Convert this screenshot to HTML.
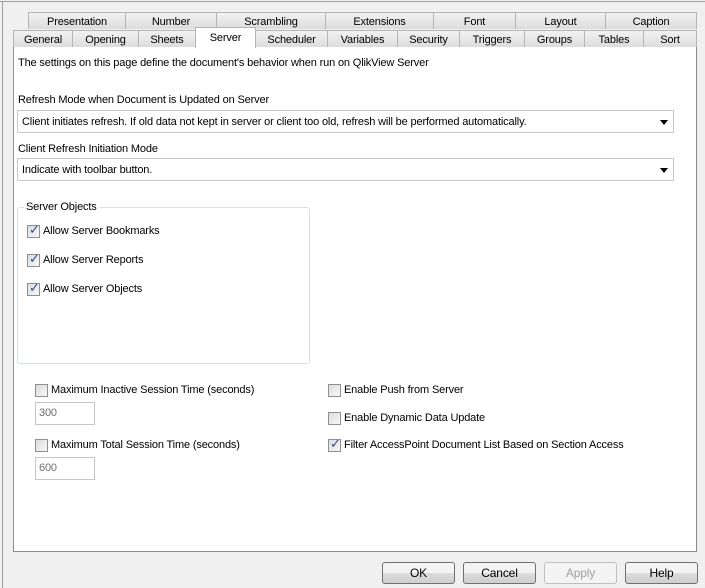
<!DOCTYPE html><html><head><style>
body{margin:0;width:705px;height:588px;background:#f0f0f0;font-family:"Liberation Sans",sans-serif;font-size:11px;letter-spacing:-0.15px;color:#000;position:relative;overflow:hidden}
.a{position:absolute;white-space:nowrap}
.l{margin-top:1px}
.t{position:absolute;height:17px;border:1px solid #b5b5b5;border-bottom:none;background:linear-gradient(#f2f2f2,#dcdcdc);text-align:center;line-height:18px;box-sizing:border-box}
.cb{position:absolute;width:13px;height:13px;box-sizing:border-box;border:1px solid #8e8f8f;background:linear-gradient(135deg,#dcdcdc,#f8f8f8)}
.cb.on::after{content:"✓";position:absolute;left:1px;top:-3px;font-size:13px;font-weight:bold;color:#2a4d94;font-family:"DejaVu Sans",sans-serif}
.cmb{position:absolute;left:17px;width:657px;height:23px;box-sizing:border-box;border:1px solid #c9c9c9;background:#fff;padding-left:4px;line-height:22px}
.cmb::after{content:"";position:absolute;right:5px;top:9px;border:4px solid transparent;border-top:5px solid #000;border-bottom:none}
.in{position:absolute;left:35px;width:60px;height:23px;box-sizing:border-box;border:1px solid #c5c5c5;background:#fff;color:#6d6d6d;padding-left:3px;line-height:20px}
.btn{position:absolute;top:562px;width:73px;height:22px;box-sizing:border-box;border:1px solid #707070;border-radius:3px;background:linear-gradient(#f4f4f4 50%,#dddddd 50%,#cfcfcf);text-align:center;line-height:20px;font-size:12px}
</style></head><body>
<div class="a" style="left:0;top:1px;width:705px;height:1px;background:#a0a0a0"></div>
<div class="a" style="left:2px;top:1px;width:1px;height:587px;background:#a0a0a0"></div>
<div class="a" style="left:13px;top:46px;width:684px;height:506px;box-sizing:border-box;border:1px solid #898c95;background:#fff"></div>
<div class="t" style="left:28px;top:12px;width:98px">Presentation</div>
<div class="t" style="left:125px;top:12px;width:92px">Number</div>
<div class="t" style="left:216px;top:12px;width:110px">Scrambling</div>
<div class="t" style="left:325px;top:12px;width:109px">Extensions</div>
<div class="t" style="left:433px;top:12px;width:83px">Font</div>
<div class="t" style="left:515px;top:12px;width:91px">Layout</div>
<div class="t" style="left:605px;top:12px;width:92px">Caption</div>
<div class="t" style="left:13px;top:30px;width:60px">General</div>
<div class="t" style="left:72px;top:30px;width:67px">Opening</div>
<div class="t" style="left:138px;top:30px;width:58px">Sheets</div>
<div class="t" style="left:195px;top:27px;width:61px;height:21px;background:#fff;line-height:20px;z-index:2">Server</div>
<div class="t" style="left:255px;top:30px;width:73px">Scheduler</div>
<div class="t" style="left:327px;top:30px;width:71px">Variables</div>
<div class="t" style="left:397px;top:30px;width:63px">Security</div>
<div class="t" style="left:459px;top:30px;width:66px">Triggers</div>
<div class="t" style="left:524px;top:30px;width:61px">Groups</div>
<div class="t" style="left:584px;top:30px;width:60px">Tables</div>
<div class="t" style="left:643px;top:30px;width:54px">Sort</div>
<div class="a" style="left:18px;top:57px">The settings on this page define the document's behavior when run on QlikView Server</div>
<div class="a" style="left:18px;top:94px">Refresh Mode when Document is Updated on Server</div>
<div class="cmb" style="top:110px">Client initiates refresh. If old data not kept in server or client too old, refresh will be performed automatically.</div>
<div class="a" style="left:18px;top:143px">Client Refresh Initiation Mode</div>
<div class="cmb" style="top:158px">Indicate with toolbar button.</div>
<div class="a" style="left:17px;top:207px;width:293px;height:157px;box-sizing:border-box;border:1px solid #d5dfe5;border-radius:3px"></div>
<div class="a" style="left:24px;top:201px;background:#fff;padding:0 2px">Server Objects</div>
<div class="cb on" style="left:27px;top:225px"></div><div class="a" style="left:43px;top:225px">Allow Server Bookmarks</div>
<div class="cb on" style="left:27px;top:254px"></div><div class="a" style="left:43px;top:254px">Allow Server Reports</div>
<div class="cb on" style="left:27px;top:283px"></div><div class="a" style="left:43px;top:283px">Allow Server Objects</div>
<div class="cb" style="left:35px;top:384px"></div><div class="a" style="left:51px;top:384px">Maximum Inactive Session Time (seconds)</div>
<div class="in" style="top:402px">300</div>
<div class="cb" style="left:35px;top:439px"></div><div class="a" style="left:51px;top:439px">Maximum Total Session Time (seconds)</div>
<div class="in" style="top:457px">600</div>
<div class="cb" style="left:328px;top:384px"></div><div class="a" style="left:344px;top:384px">Enable Push from Server</div>
<div class="cb" style="left:328px;top:412px"></div><div class="a" style="left:344px;top:412px">Enable Dynamic Data Update</div>
<div class="cb on" style="left:328px;top:439px"></div><div class="a" style="left:344px;top:439px">Filter AccessPoint Document List Based on Section Access</div>
<div class="btn" style="left:382px">OK</div>
<div class="btn" style="left:463px">Cancel</div>
<div class="btn" style="left:544px;border-color:#c0c0c0;background:#f4f4f4;color:#a0a0a0">Apply</div>
<div class="btn" style="left:625px">Help</div>
</body></html>
